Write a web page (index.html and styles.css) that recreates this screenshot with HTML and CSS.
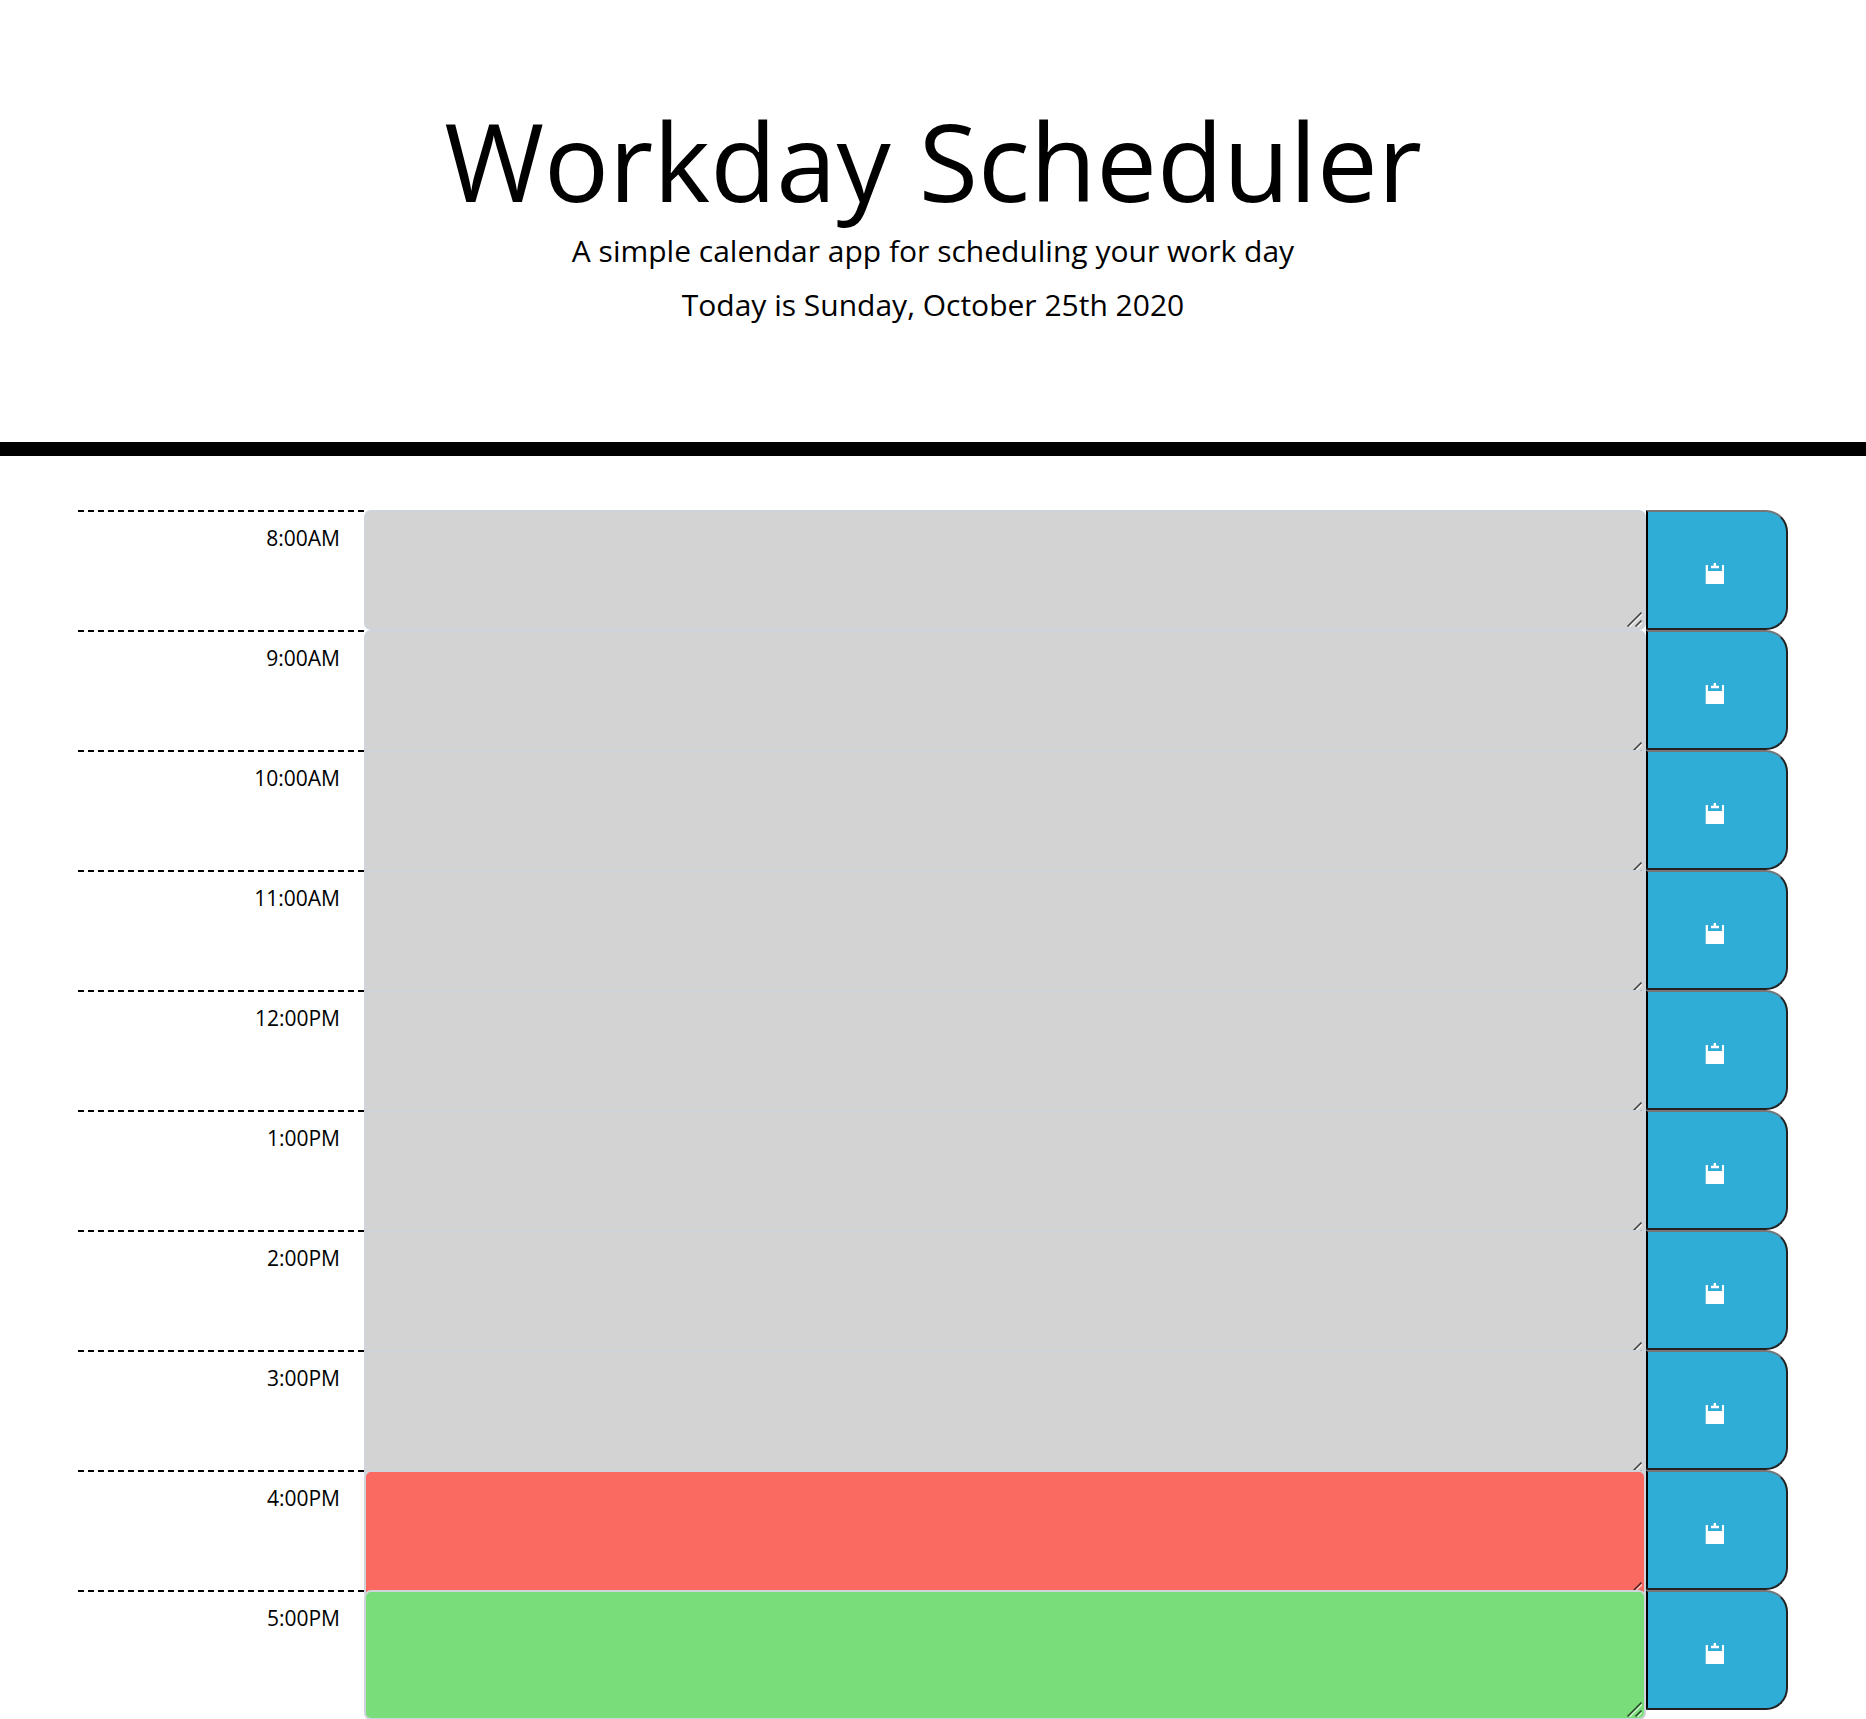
FILE: index.html
```
<!DOCTYPE html>
<html lang="en">
<head>
<meta charset="utf-8">
<title>Workday Scheduler</title>
<link rel="stylesheet" href="styles.css">
</head>
<body>
<svg class="sprite" aria-hidden="true">
  <symbol id="clip" viewBox="0 0 20 21">
    <path d="M.7 2H3v6h14V2h2v19H.7z M6 2.700h2.700V0H11v2.700h3V5.300H6z"/>
  </symbol>
  <symbol id="grip" viewBox="0 0 16 16">
    <path class="grip-light" d="M3.500 15L16 2.500M11.500 15L16 10.500"/>
    <path class="grip-dark" d="M1.500 14.500L15.500 .5M9.500 14.500L15.500 8.500"/>
  </symbol>
</svg>
<header class="header">
  <h1 class="title">Workday Scheduler</h1>
  <p class="lead">A simple calendar app for scheduling your work day</p>
  <p class="lead">Today is Sunday, October 25th 2020</p>
</header>
<main class="schedule" id="schedule"></main>
<script src="script.js"></script>
</body>
</html>
```
FILE: styles.css
```
* { box-sizing: border-box; }
body {
  margin: 0;
  height: 1719px;
  overflow: hidden;
  background: #fff;
  color: #000;
  font-family: "Open Sans", "Noto Sans", sans-serif;
}
.sprite { display: none; }
.header {
  height: 456px;
  padding-top: 94px;
  border-bottom: 14px solid #000;
  text-align: center;
}
.title { margin: 0 0 1px; font-size: 108.2px; line-height: 132px; font-weight: 400; }
.lead { margin: 0 0 6px; font-size: 30px; line-height: 48px; }
.schedule { padding: 54px 78px 0; }
.row {
  display: grid;
  grid-template-columns: 286px 1282px 142px;
  height: 120px;
}
.hour {
  padding: 10px 24px 0 0;
  border-top: 2px dashed #000;
  text-align: right;
  font-size: 21px;
  line-height: 32px;
}
.entry {
  position: relative;
  height: 130px;
  border: 2px solid #ced4da;
  border-radius: 7px;
}
.row:first-child .entry { height: 120px; }
.past { background: #d3d3d3; }
.present { background: #fa6a61; }
.future { background: #79de79; }
.grip { position: absolute; right: 2px; bottom: 0; width: 16px; height: 16px; }
.grip-dark, .grip-light { fill: none; stroke-width: 1.500; }
.grip-dark { stroke: #000; stroke-opacity: .7; }
.grip-light { stroke: #fff; stroke-opacity: .65; }
.save {
  display: flex;
  align-items: center;
  justify-content: center;
  position: relative;
  height: 120px;
  padding: 0;
  border: 2px solid;
  border-color: #767676 #212121 #212121 #000;
  border-radius: 0 22px 22px 0;
  background: #2fadd6;
}
.clip { width: 20px; height: 21px; margin-top: 7px; margin-right: 4px; fill: #fff; }
```
FILE: script.js
```
const hours = ["8:00AM", "9:00AM", "10:00AM", "11:00AM", "12:00PM", "1:00PM", "2:00PM", "3:00PM", "4:00PM", "5:00PM"];
const current = 8;
document.getElementById("schedule").innerHTML = hours.map((hour, i) => {
  const state = i < current ? "past" : i === current ? "present" : "future";
  return `<div class="row">
    <div class="hour">${hour}</div>
    <div class="entry ${state}"><svg class="grip"><use href="#grip"/></svg></div>
    <button class="save" aria-label="Save ${hour}"><svg class="clip"><use href="#clip"/></svg></button>
  </div>`;
}).join("");
```
